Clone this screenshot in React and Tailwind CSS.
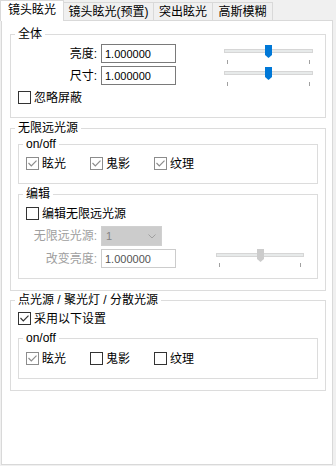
import React from "react";

const Check = ({ checked, gray }) => (
  <span
    className={`w-[13px] h-[13px] border bg-white flex items-center justify-center shrink-0 ${
      gray ? "border-[#8c8c8c]" : "border-[#333333]"
    }`}
  >
    {checked && (
      <svg width="11" height="11" viewBox="0 0 11 11">
        <path
          d="M1.5 5 L4.3 7.8 L9.5 2.6"
          fill="none"
          stroke={gray ? "#8c8c8c" : "#333333"}
          strokeWidth="1.2"
        />
      </svg>
    )}
  </span>
);

const CheckItem = ({ checked, gray, label, className = "" }) => (
  <div className={`flex items-center h-[13px] ${className}`}>
    <Check checked={checked} gray={gray} />
    <span className="ml-[3px] leading-[14px] whitespace-nowrap">{label}</span>
  </div>
);

const Group = ({ label, className = "", children }) => (
  <div className={`relative border border-[#dcdcdc] ${className}`}>
    <span className="absolute left-[4px] -top-[8px] bg-white px-[3px] leading-[14px] whitespace-nowrap">
      {label}
    </span>
    {children}
  </div>
);

const Input = ({ disabled, className = "" }) => (
  <div
    className={`w-[75px] h-[19px] border bg-white pl-[3px] flex items-center text-[11px] font-['Liberation_Sans',sans-serif] ${
      disabled ? "border-[#cccccc] text-[#545454]" : "border-[#7a7a7a] text-[#000000]"
    } ${className}`}
  >
    1.000000
  </div>
);

const Thumb = ({ disabled }) => (
  <svg width="7" height="13" viewBox="0 0 7 13">
    <path d="M0 0 H7 V10 L3.5 13 L0 10 Z" fill={disabled ? "#cccccc" : "#0078d7"} />
  </svg>
);

const Slider = ({ disabled, className = "", w, thumbLeft, trackTop, tickTop, tickRight }) => (
  <div className={`relative self-start h-[19px] shrink-0 ${className}`} style={{ width: w }}>
    <div
      className="absolute left-0 right-0 h-[4px] bg-[#e7eaea] border border-[#d6d6d6]"
      style={{ top: trackTop }}
    />
    <div className="absolute" style={{ left: thumbLeft, top: trackTop - 4 }}>
      <Thumb disabled={disabled} />
    </div>
    <div className="absolute left-[3px] w-px h-[4px] bg-[#a0a0a0]" style={{ top: tickTop }} />
    <div className="absolute w-px h-[4px] bg-[#a0a0a0]" style={{ top: tickTop, left: tickRight }} />
  </div>
);

export default function App() {
  return (
    <div className="w-[336px] h-[466px] bg-[#f0f0f0] text-[12px] leading-[14px] text-black font-['Liberation_Sans','Noto_Sans_CJK_SC',sans-serif]">
      {/* tabs */}
      <div className="flex items-end h-[20px]">
        <div className="relative z-10 -mb-px h-[21px] w-[64px] bg-white border-t border-l border-r border-[#d9d9d9] flex items-center justify-center pb-[2px]">
          镜头眩光
        </div>
        <div className="h-[18px] w-[90px] border-t border-r border-[#d9d9d9] flex items-center justify-center">
          镜头眩光(预置)
        </div>
        <div className="h-[18px] w-[59px] border-t border-r border-[#d9d9d9] flex items-center justify-center">
          突出眩光
        </div>
        <div className="h-[18px] w-[60px] border-t border-r border-[#d9d9d9] flex items-center justify-center">
          高斯模糊
        </div>
      </div>

      {/* panel */}
      <div className="ml-px w-[332px] h-[445px] border border-[#d9d9d9] bg-white">
        {/* 全体 */}
        <Group label="全体" className="ml-[8px] mt-[13px] w-[316px] h-[84px]">
          <div className="pt-[9px]">
            <div className="flex items-center h-[19px]">
              <span className="w-[86px] text-right">亮度:</span>
              <Input className="ml-[4px]" />
              <Slider className="ml-[48px]" w={89} thumbLeft={41} trackTop={5} tickTop={16} tickRight={85} />
            </div>
            <div className="flex items-center h-[19px] mt-[3px]">
              <span className="w-[86px] text-right">尺寸:</span>
              <Input className="ml-[4px]" />
              <Slider className="ml-[48px]" w={89} thumbLeft={41} trackTop={5} tickTop={16} tickRight={85} />
            </div>
            <CheckItem className="mt-[6px] ml-[7px]" label="忽略屏蔽" />
          </div>
        </Group>

        {/* 无限远光源 */}
        <Group label="无限远光源" className="ml-[8px] mt-[10px] w-[316px] h-[163px]">
          <Group label="on/off" className="ml-[7px] mt-[15px] w-[300px] h-[40px]">
            <div className="flex pt-[12px] pl-[7px]">
              <CheckItem className="w-[64px]" checked gray label="眩光" />
              <CheckItem className="w-[64px]" checked gray label="鬼影" />
              <CheckItem className="w-[64px]" checked gray label="纹理" />
            </div>
          </Group>
          <Group label="编辑" className="ml-[7px] mt-[10px] w-[300px] h-[85px]">
            <CheckItem className="mt-[12px] ml-[7px]" label="编辑无限远光源" />
            <div className="flex items-center mt-[6px] h-[20px]">
              <span className="w-[78px] text-right text-[#a0a0a0]">无限远光源:</span>
              <div className="ml-[4px] w-[61px] h-[20px] bg-[#cccccc] border border-[#d0d0d0] flex items-center justify-between pl-[4px] pr-[5px]">
                <span className="text-[11px] text-[#838383] font-['Liberation_Sans',sans-serif]">1</span>
                <svg width="8" height="5" viewBox="0 0 8 5">
                  <path d="M0.5 0.5 L4 4 L7.5 0.5" fill="none" stroke="#a0a0a0" strokeWidth="1" />
                </svg>
              </div>
            </div>
            <div className="flex items-center mt-[3px] h-[19px]">
              <span className="w-[78px] text-right text-[#a0a0a0]">改变亮度:</span>
              <Input disabled className="ml-[4px]" />
              <Slider disabled className="ml-[40px]" w={88} thumbLeft={41} trackTop={4} tickTop={14} tickRight={84} />
            </div>
          </Group>
        </Group>

        {/* 点光源 */}
        <Group label="点光源 / 聚光灯 / 分散光源" className="ml-[8px] mt-[9px] w-[316px] h-[91px]">
          <CheckItem className="mt-[11px] ml-[7px]" checked label="采用以下设置" />
          <Group label="on/off" className="ml-[7px] mt-[13px] w-[300px] h-[41px]">
            <div className="flex pt-[13px] pl-[7px]">
              <CheckItem className="w-[64px]" checked gray label="眩光" />
              <CheckItem className="w-[64px]" label="鬼影" />
              <CheckItem className="w-[64px]" label="纹理" />
            </div>
          </Group>
        </Group>
      </div>
    </div>
  );
}
